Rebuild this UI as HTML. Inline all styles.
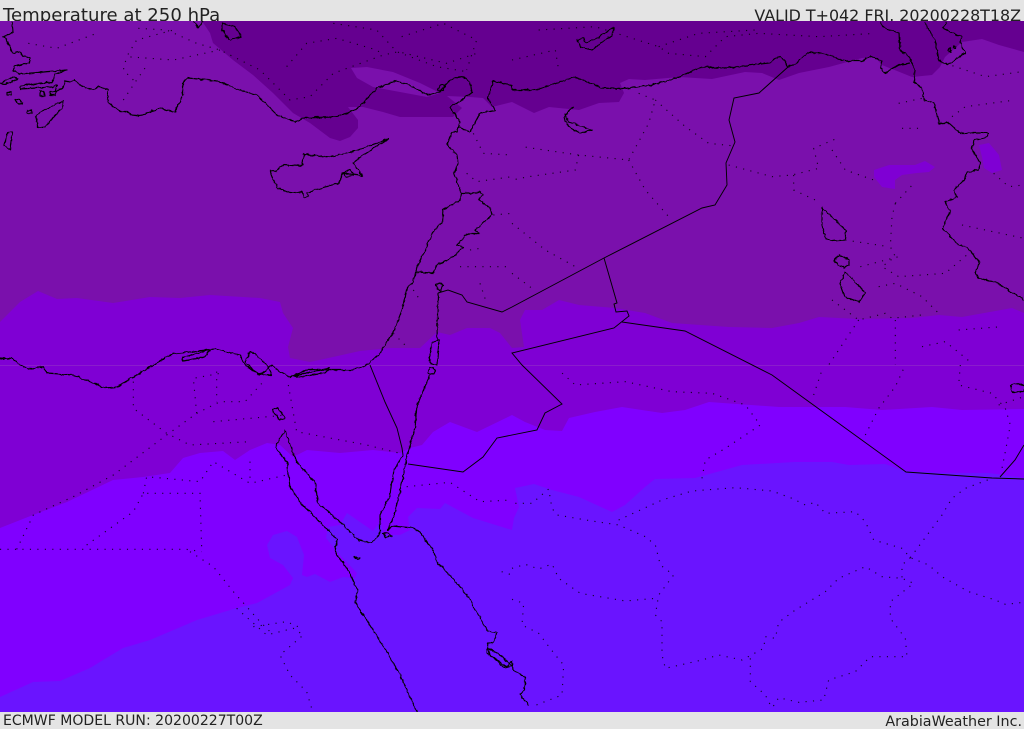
<!DOCTYPE html>
<html><head><meta charset="utf-8"><style>
html,body{margin:0;padding:0;background:#e4e4e4;width:1024px;height:729px;overflow:hidden}
svg{display:block}
text{font-family:"DejaVu Sans",sans-serif;fill:#222}
.c{fill:none;stroke:#000;stroke-width:1.15;stroke-linejoin:round}
.b{fill:none;stroke:#000;stroke-width:.95}
.d{fill:none;stroke:#000;stroke-width:3.4;stroke-dasharray:3.4 19;stroke-linecap:butt;opacity:.85}
</style></head><body>
<svg width="1024" height="729" viewBox="0 0 1024 729" xmlns="http://www.w3.org/2000/svg">
<defs><filter id="j" filterUnits="userSpaceOnUse" x="0" y="21" width="1024" height="691"><feTurbulence type="fractalNoise" baseFrequency="0.22" numOctaves="2" seed="4"/><feDisplacementMap in="SourceGraphic" scale="3.2" xChannelSelector="R" yChannelSelector="G"/></filter></defs>
<rect width="1024" height="729" fill="#e4e4e4"/>
<text x="3" y="21" font-size="18.1">Temperature at 250 hPa</text>
<text x="1021" y="21" font-size="15.9" text-anchor="end">VALID T+042 FRI. 20200228T18Z</text>
<text x="3" y="725" font-size="14.05">ECMWF MODEL RUN: 20200227T00Z</text>
<text x="1022" y="726" font-size="14.3" text-anchor="end">ArabiaWeather Inc.</text>
<svg x="0" y="21" width="1024" height="691" viewBox="0 21 1024 691">
<rect y="21" width="1024" height="691" fill="#7a10ac"/>
<path fill="#650090" d="M202,21 210,33 213,43 233,60 253,75 273,93 293,113 310,123 330,138 340,141 350,137 358,128 358,120 348,107 363,107 383,112 400,117 433,117 453,117 462,108 447,96 470,97 483,98 492,107 512,102 534,113 549,107 579,110 599,103 619,102 624,93 620,83 629,79 645,80 679,77 712,79 745,72 762,73 779,80 799,73 829,67 862,58 875,57 882,65 912,77 932,75 940,67 945,57 962,42 982,39 999,45 1024,52 1024,21Z"/>
<path fill="#7a10ac" d="M351,68 367,67 393,72 420,83 440,93 427,97 400,92 373,87 357,78Z"/>
<path fill="#7f00d4" d="M0,322 20,302 38,291 57,299 77,298 113,303 150,297 180,298 210,295 260,298 280,302 283,313 293,328 288,347 290,358 310,362 333,357 360,351 390,348 420,348 437,332 450,335 467,328 490,328 500,333 512,348 524,347 520,320 525,310 542,310 559,300 579,305 615,308 645,313 672,323 729,327 772,328 799,323 819,317 859,319 912,318 939,315 962,317 1012,308 1024,313 1024,712 0,712Z"/>
<path fill="#7f00d4" d="M874,170 889,165 915,165 925,161 935,167 929,172 917,173 902,175 895,180 895,189 882,187 874,177Z"/>
<path fill="#7f00d4" d="M979,145 989,143 999,155 1002,170 992,173 984,168 982,157Z"/>
<path fill="#8000ff" d="M0,528 33,515 67,502 113,480 143,477 170,473 183,458 200,453 223,451 235,460 250,450 267,443 280,445 293,457 307,450 340,453 373,450 400,453 410,448 422,445 433,432 450,422 477,432 512,415 525,422 545,430 562,431 569,418 595,412 622,407 662,413 685,410 709,402 779,407 845,407 882,410 932,407 962,410 1024,409 1024,712 0,712Z"/>
<path fill="#6a14ff" d="M0,697 33,682 60,681 90,668 123,648 150,640 197,620 237,608 257,603 290,585 293,578 283,565 270,558 267,545 273,535 287,531 297,537 304,555 302,575 307,577 315,574 330,582 343,577 355,578 357,573 337,552 326,538 328,527 340,525 347,513 360,522 373,531 380,522 384,535 400,535 410,530 408,517 417,508 440,509 445,503 473,518 512,530 514,518 519,507 515,488 534,484 552,490 579,497 612,512 625,505 645,487 655,479 695,478 742,465 795,462 832,462 849,465 885,464 905,471 945,473 989,473 1024,478 1024,712 0,712Z"/>
<rect y="365" width="1024" height="1" fill="#8a1ccc"/>

<!-- dotted internal borders -->
<g transform="translate(512,365) scale(.33333)">
<path class="d" d="M10,415 60,415 110,372 120,430 135,450 240,468 320,480 400,515 430,540 445,600 485,630 440,690 430,750 450,770 450,870 460,910 570,885 620,870 690,885 755,850 760,815 790,820 800,772 850,735 940,680 980,640 1060,605 1110,635 1170,640 1205,655 1135,710 1135,760 1180,820 1185,875 1075,875 1030,920 950,945 935,1005 860,1012 800,998 780,1030"/>
<path class="d" d="M320,465 450,405 540,378 670,368 780,378 840,400 880,420 910,412 940,445 1030,440 1060,470 1085,525 1170,550 1195,578 1250,600 1290,635 1370,680 1450,705 1480,718 1536,712"/>
<path class="d" d="M1195,578 1290,450 1320,400 1360,370 1440,340"/>
<path class="d" d="M1195,578 1170,600 1170,640"/>
<path class="d" d="M0,610 40,598 80,612 120,597 140,640 205,685 340,708 430,700"/>
<path class="d" d="M0,703 35,715 30,780 80,805 130,870 155,900 150,990 60,1025"/>
<path class="d" d="M715,880 715,950 760,990 780,1030"/>
<path class="d" d="M570,340 580,285 640,250 745,180 700,120 600,85 480,80 340,50 190,60 140,15"/>
<path class="d" d="M905,90 930,15"/>
<path class="d" d="M1060,210 1100,130 1150,65 1180,0"/>
<path class="d" d="M1345,0 1340,60 1440,85 1480,130 1495,180 1480,260 1470,310"/>
<path class="d" d="M1460,120 1536,95"/>
</g>
<g transform="translate(0,365) scale(.33333)">
<path class="d" d="M0,553 560,553 605,560"/>
<path class="d" d="M570,560 640,605 700,680 780,770 810,800"/>
<path class="d" d="M50,553 100,450 220,395 340,330 500,210 590,145 580,40 660,25"/>
<path class="d" d="M260,540 400,440 430,385 600,385 605,550"/>
<path class="d" d="M430,385 440,335 600,350 640,290 750,355 860,330"/>
<path class="d" d="M400,50 400,130 500,205 570,240 750,230"/>
<path class="d" d="M590,145 660,110 735,110 790,50"/>
<path class="d" d="M640,170 860,150"/>
<path class="d" d="M650,20 650,110"/>
<path class="d" d="M865,60 890,200 1100,240 1200,265"/>
<path class="d" d="M1220,365 1350,352 1440,410 1536,405"/>
<path class="d" d="M750,290 750,355"/>
<path class="d" d="M710,730 800,810 880,790 910,810 840,870 870,930 920,980 935,1030"/>
<path class="d" d="M760,785 860,770 905,790"/>
<path class="d" d="M1505,620 1536,630"/>
</g>
<g transform="scale(.33333)">
<path class="d" d="M85,130 170,145 290,100"/>
<path class="d" d="M660,150 520,180 380,170 410,120 520,90"/>
<path class="d" d="M400,240 370,210 380,170"/>
<path class="d" d="M370,300 410,240 445,190"/>
<path class="d" d="M415,85 500,90 590,130 660,150 780,210 870,300 930,290 1000,220 1150,165 1195,155 1340,190 1430,160"/>
<path class="d" d="M860,200 920,130 1010,115 1130,150 1150,165"/>
<path class="d" d="M1000,70 1130,90 1190,155 1310,200 1400,215"/>
<path class="d" d="M1205,110 1330,70 1430,120 1400,210"/>
<path class="d" d="M1420,400 1450,460 1536,465"/>
<path class="d" d="M1400,520 1430,545 1536,530"/>
<path class="d" d="M1380,800 1460,800 1536,800"/>
<path class="d" d="M1440,850 1460,910"/>
<path class="d" d="M1240,870 1260,900"/>
<path class="d" d="M1180,1000 1220,1040"/>
<path class="d" d="M1480,645 1536,640"/>
<path class="d" d="M1410,750 1440,745"/>
</g>
<g transform="translate(512,0) scale(.33333)">
<path class="d" d="M0,180 130,150 140,210"/>
<path class="d" d="M80,90 250,80 440,140 470,160 580,170 640,110 740,100 920,110 1090,100"/>
<path class="d" d="M440,140 560,100 730,90"/>
<path class="d" d="M380,280 430,300 410,370 350,480 200,465 30,440"/>
<path class="d" d="M430,300 520,380 590,430 660,437"/>
<path class="d" d="M350,480 400,570 470,650"/>
<path class="d" d="M200,465 190,510 50,530 0,540"/>
<path class="d" d="M650,495 780,530 840,525 920,505 905,445 975,415"/>
<path class="d" d="M960,450 1000,510 1085,540"/>
<path class="d" d="M845,525 845,570 910,600"/>
<path class="d" d="M1150,610 1140,650 1135,740 1150,770 1110,800 1160,830 1300,820 1370,760"/>
<path class="d" d="M1150,610 1210,545"/>
<path class="d" d="M1160,310 1230,295"/>
<path class="d" d="M1170,385 1220,385"/>
<path class="d" d="M1320,350 1360,320 1510,300"/>
<path class="d" d="M1000,720 1130,740"/>
<path class="d" d="M1045,800 1160,770"/>
<path class="d" d="M1100,860 1150,850 1230,890 1280,940"/>
<path class="d" d="M960,900 1040,960 1120,940 1140,955 1230,945"/>
<path class="d" d="M1300,190 1420,230 1530,215"/>
<path class="d" d="M1350,675 1536,715"/>
<path class="d" d="M1445,520 1490,560 1536,555"/>
<path class="d" d="M0,670 100,750 190,800"/>
<path class="d" d="M0,820 60,865"/>
<path class="d" d="M1040,960 950,1095"/>
<path class="d" d="M1150,960 1150,1095"/>
<path class="d" d="M1340,990 1470,980"/>
<path class="d" d="M1230,1040 1300,1025 1380,1090"/>
</g>

<!-- coasts -->
<g filter="url(#j)">
<path class="c" d="M12,22 13,32 3,37 8,42 12,53 20,52 23,56 30,58 30,63 15,66 13,71 20,74 67,70 55,74 53,82 32,84 20,86 20,89 52,87 57,85 55,92 63,88 65,81 70,82 74,80 83,87 93,90 98,86 108,90 107,97 109,103 120,112 127,112 132,115 140,116 150,112 160,108 175,112 178,105 183,95 183,82 188,78 217,81 240,90 257,95 267,105 277,115 295,122 303,118 333,117 340,115 347,113 356,110 363,103 377,88 395,81 410,85 428,95 440,92 443,88 450,80 462,76 470,82 472,92 462,100 450,107 460,122 457,132 452,132 447,145 457,155 458,163 454,173 461,193 460,200 443,210 442,223 433,232 425,250 415,272 413,283 407,287 402,310 393,333 380,353 367,365 353,370 330,370 310,369 290,377 280,372 272,365 260,375 245,365 240,355 215,349 172,354 153,365 117,387 105,388 73,375 47,373 43,367 28,369 20,365 13,359 0,358"/>
<path class="c" d="M250,352 254,353 267,365 272,375 258,374 245,362Z"/>
<path class="c" d="M182,357 210,350 205,357 183,361Z"/>
<path class="c" d="M292,376 330,368 325,373 300,377Z"/>
<path class="c" d="M440,85 446,86 443,91 438,90Z"/>
<path class="c" d="M461,193 477,193 480,192 483,195 478,200 490,208 492,215 475,230 480,234 467,234 457,245 463,247 453,257 437,265 433,273 415,272"/>
<path class="c" d="M458,127 470,132 480,113 495,110 488,98 493,81 512,85 512,90 535,90 575,77 602,88 622,89 652,85 679,77 702,67 725,68 769,63 779,56 785,60 787,67 795,65 807,53 822,53 845,61 862,61 870,56 882,61 880,67 885,73 899,65 910,63"/>
<path class="c" d="M880,22 884,28 899,33 900,50 910,58 915,70 914,82 922,88 924,100 934,103 939,123 949,123 960,133 989,133 987,137 974,140 972,150 980,162 979,170 967,172 964,180 954,190 957,197 945,202 950,212 942,228 959,245 967,247 980,263 975,273 979,279 995,282 1024,300"/>
<path class="c" d="M924,22 935,40 939,60 947,65 965,53 960,42 962,37 952,33 942,28 947,22"/>
<path class="c" d="M948,50 950,48 951,52ZM953,46 956,46 955,49Z"/>
<path class="c" d="M822,208 833,218 846,230 845,240 832,241 825,237 822,225Z"/>
<path class="c" d="M834,260 839,255 849,260 849,265 844,268 838,265Z"/>
<path class="c" d="M845,272 852,278 865,293 859,302 845,297 840,283Z"/>
<path class="c" d="M577,40 584,38 585,43 599,37 614,27 612,35 592,50 580,47Z"/>
<path class="c" d="M573,107 565,115 569,122 592,130 580,133 569,127 564,117Z"/>
<path class="c" d="M270,170 276,172 282,165 302,166 304,154 330,157 358,150 388,139 363,155 353,163 363,176 343,173 339,183 308,192 308,197 304,197 302,192 290,193 278,188 273,180Z"/>
<path class="c" d="M343,173 350,170 354,175 346,177Z"/>
<path class="c" d="M63,101 40,112 36,117 38,128 45,127 62,108Z"/>
<path class="c" d="M8,133 12,132 10,150 4,145Z"/>
<path class="c" d="M193,21 198,28 203,21"/>
<path class="c" d="M222,23 235,27 241,37 230,40 228,38 222,30Z"/>
<path class="c" d="M0,83 13,77 18,79 5,84Z"/>
<path class="c" d="M7,92 11,92 11,95 7,95Z"/>
<path class="c" d="M15,99 20,100 23,104 17,103Z"/>
<path class="c" d="M27,110 32,110 32,113 27,113Z"/>
<path class="c" d="M40,91 44,91 45,96 40,96Z"/>
<path class="c" d="M50,92 56,92 55,95 50,95Z"/>
<path class="c" d="M403,455 393,472 390,495 380,515 380,533 372,543 358,540 340,522 318,503 315,482 297,462 290,445 285,430 275,447 287,462 290,487 300,502 328,530 337,540 335,552 350,573 358,592 355,602 383,645 400,675 417,712"/>
<path class="c" d="M408,453 402,482 395,512 388,530 392,526 413,528 420,532 433,550 437,562 450,575 467,595 477,612 488,631 497,633 493,643 488,643 487,653 507,667 512,661 513,670 525,677 525,690 520,695 529,705"/>
<path class="c" d="M272,410 278,408 285,418 280,420Z"/>
<path class="c" d="M439,283 436,285 437,290 441,291 443,286Z"/>
<path class="c" d="M438,293 437,340"/>
<path class="c" d="M432,343 439,340 437,365 430,363 430,353Z"/>
<path class="c" d="M430,367 436,370 433,375 428,373Z"/>
<path class="c" d="M430,375 417,405 415,428 408,453"/>
<path class="c" d="M383,534 388,533 392,536 386,537Z"/>
<path class="c" d="M354,557 360,558 358,560Z"/>
<path class="c" d="M1010,385 1018,383 1024,386 1024,392 1012,392Z"/>
<path class="c" d="M488,648 500,655 508,662 512,666 505,668 490,655Z"/>
</g>
<!-- borders -->
<path class="b" d="M438,293 448,290 462,295 467,302 502,312 512,307 604,258 702,208 715,205 727,185 726,163 735,142 729,120 734,98 759,93 788,67"/>
<path class="b" d="M604,258 617,303 614,304 616,312 627,311 629,316 614,328 512,353 522,365 562,404 545,413 537,430 497,438 483,457 463,472 408,464"/>
<path class="b" d="M622,322 685,331 772,375 906,472 992,478 1024,479"/>
<path class="b" d="M1000,477 1015,460 1024,445"/>
<path class="b" d="M370,365 385,402 397,428 402,448 403,455"/>
</svg>
</svg>
</body></html>
